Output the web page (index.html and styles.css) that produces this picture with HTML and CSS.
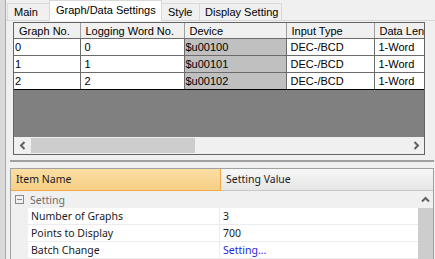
FILE: index.html
```html
<!doctype html>
<html>
<head>
    <meta charset="UTF-8">
    <title>Graph/Data Settings</title>
    <link rel="stylesheet" href="styles.css">
</head>
<body>
    <div class="window">
        <div class="side"></div>
        <div class="main">
            <ul class="tabs">
                <li class="t-main">Main</li>
                <li class="t-graph active">Graph/Data Settings</li>
                <li class="t-style">Style</li>
                <li class="t-disp">Display Setting</li>
            </ul>
            <div class="panel">
                <div class="grid">
                    <table class="data">
                        <colgroup>
                            <col class="c1"><col class="c2"><col class="c3"><col class="c4"><col class="c5">
                        </colgroup>
                        <tr class="head">
                            <th>Graph No.</th><th>Logging Word No.</th><th>Device</th><th>Input Type</th><th>Data Length</th>
                        </tr>
                        <tr>
                            <td>0</td><td>0</td><td class="dev">$u00100</td><td>DEC-/BCD</td><td>1-Word</td>
                        </tr>
                        <tr>
                            <td>1</td><td>1</td><td class="dev">$u00101</td><td>DEC-/BCD</td><td>1-Word</td>
                        </tr>
                        <tr class="last">
                            <td>2</td><td>2</td><td class="dev">$u00102</td><td>DEC-/BCD</td><td>1-Word</td>
                        </tr>
                    </table>
                    <div class="empty"></div>
                    <div class="hscroll">
                        <div class="arrow">
                            <svg width="8" height="9" viewBox="0 0 8 9"><path d="M5.5 1 L2 4.5 L5.5 8" fill="none" stroke="#606060" stroke-width="2"/></svg>
                        </div>
                        <div class="thumb"></div>
                        <div class="track"></div>
                        <div class="arrow">
                            <svg width="8" height="9" viewBox="0 0 8 9"><path d="M2.5 1 L6 4.5 L2.5 8" fill="none" stroke="#606060" stroke-width="2"/></svg>
                        </div>
                    </div>
                </div>
            </div>
            <div class="splitter"></div>
            <div class="props">
                <div class="props-body">
                    <div class="props-head">
                        <div class="ph-name">Item Name</div>
                        <div class="ph-value">Setting Value</div>
                    </div>
                    <div class="cat">
                        <span class="minus"></span>
                        <span>Setting</span>
                    </div>
                    <div class="row">
                        <div class="margin"></div>
                        <div class="name">Number of Graphs</div>
                        <div class="value">3</div>
                    </div>
                    <div class="row">
                        <div class="margin"></div>
                        <div class="name">Points to Display</div>
                        <div class="value">700</div>
                    </div>
                    <div class="row">
                        <div class="margin"></div>
                        <div class="name">Batch Change</div>
                        <div class="value link">Setting...</div>
                    </div>
                </div>
                <div class="vscroll">
                    <div class="varrow">
                        <svg width="9" height="7" viewBox="0 0 9 7"><path d="M1 5.5 L4.5 2 L8 5.5" fill="none" stroke="#606060" stroke-width="2"/></svg>
                    </div>
                    <div class="vthumb"></div>
                </div>
            </div>
        </div>
    </div>
</body>
</html>
```

FILE: styles.css
```css
body {
    margin: 0;
    background-color: #f0f0f0;
    font-family: "Liberation Sans", Arial, sans-serif;
    font-size: 11px;
    color: #000;
}
.window {
    display: flex;
    width: 435px;
    height: 259px;
    overflow: hidden;
}
.side {
    width: 5px;
    flex-shrink: 0;
    background-color: #dadada;
    border-right: 1px solid #a9a9a9;
}
.main {
    flex: 1;
    display: flex;
    flex-direction: column;
    min-width: 0;
}

/* 选项卡 */
.tabs {
    display: flex;
    align-items: flex-end;
    height: 20px;
    margin: 0;
    padding: 0 0 0 2px;
    list-style: none;
}
.tabs li {
    box-sizing: border-box;
    flex-shrink: 0;
    height: 17px;
    line-height: 16px;
    padding-left: 6px;
    border: 1px solid #d9d9d9;
    border-bottom: none;
    margin-left: -1px;
    font-size: 11px;
    white-space: nowrap;
}
.tabs .t-main { width: 43px; }
.tabs .t-graph { width: 113px; }
.tabs .t-style { width: 39px; }
.tabs .t-disp { width: 83px; padding-left: 5px; }
.tabs li.active {
    height: 21px;
    line-height: 19px;
    background-color: #fff;
    position: relative;
    z-index: 1;
    margin-bottom: -1px;
}
.panel {
    border-top: 1px solid #d9d9d9;
    padding: 1px 4px 0 7px;
}

/* 数据表格 */
.grid {
    border: 1px solid #646464;
    width: 410px;
    overflow: hidden;
}
.data {
    border-collapse: collapse;
    table-layout: fixed;
    width: 440px;
}
.c1 { width: 66px; }
.c2 { width: 104px; }
.c3 { width: 102px; }
.c4 { width: 88px; }
.c5 { width: 80px; }
.data th,
.data td {
    height: 16px;
    padding: 0 0 0 4px;
    text-align: left;
    font-weight: normal;
    white-space: nowrap;
    overflow: hidden;
    border: 1px solid #6b6b6b;
    border-top: none;
    font-size: 11px;
}
.data th:first-child,
.data td:first-child {
    border-left: none;
}
.data td:first-child {
    padding-left: 1px;
}
.data .head th {
    height: 15px;
    background-color: #f0f0f0;
    border-color: #a0a0a0;
    border-bottom-color: #6b6b6b;
    padding-left: 5px;
}
.data td {
    background-color: #fff;
}
.data td.dev {
    background-color: #c0c0c0;
    padding-left: 1px;
}
.data .last td {
    border-bottom: 1px solid #000;
}
.empty {
    height: 47px;
    background-color: #808080;
}
.hscroll {
    display: flex;
    height: 17px;
    background-color: #f0f0f0;
}
.hscroll .arrow {
    width: 17px;
    display: flex;
    align-items: center;
    justify-content: center;
}
.hscroll .thumb {
    width: 164px;
    margin: 1px 0;
    background-color: #cdcdcd;
}
.hscroll .track {
    flex: 1;
}

.splitter {
    height: 1px;
    margin: 5px 1px 0 4px;
    border-top: 1px solid #a0a0a0;
    border-bottom: 1px solid #a0a0a0;
    background-color: #fff;
}

/* 属性表格 */
.props {
    display: flex;
    margin: 6px 1px 0 4px;
    border: 1px solid #a0a0a0;
    border-bottom: none;
    background-color: #f0f0f0;
    flex: 1;
    font-family: "Noto Sans", "Open Sans", sans-serif;
    font-size: 10.5px;
    color: #1a1a1a;
    position: relative;
}
.props-body {
    flex: 1;
    min-width: 0;
}
.props-head {
    display: flex;
    height: 22px;
    margin-right: -15px;
    position: relative;
    z-index: 1;
}
.ph-name {
    width: 204px;
    padding-left: 5px;
    line-height: 21px;
    background: linear-gradient(#fbdea4, #f7cf85);
    border-right: 1px solid #f0a84c;
    border-bottom: 1px solid #f0a84c;
}
.ph-value {
    flex: 1;
    padding-left: 5px;
    line-height: 21px;
    background: linear-gradient(#f7f7f7, #e6e6e6);
    border-bottom: 1px solid #c8c8c8;
}
.cat {
    display: flex;
    align-items: center;
    height: 17px;
    color: #6d6d6d;
}
.minus {
    width: 7px;
    height: 7px;
    margin: 0 6px 0 4px;
    border: 1px solid #8a8a8a;
    background: linear-gradient(#8a8a8a, #8a8a8a) center / 5px 1px no-repeat;
}
.row {
    display: flex;
    height: 17px;
}
.row .margin {
    width: 17px;
    flex-shrink: 0;
}
.row .name {
    width: 188px;
    padding-left: 3px;
    background-color: #fff;
    border-bottom: 1px solid #ececec;
    border-right: 1px solid #ececec;
    line-height: 16px;
}
.row .value {
    flex: 1;
    padding-left: 3px;
    background-color: #fff;
    border-bottom: 1px solid #ececec;
    line-height: 16px;
}
.row .value.link {
    color: #2626e6;
}
.vscroll {
    width: 15px;
    display: flex;
    flex-direction: column;
    padding-top: 22px;
    background-color: #f0f0f0;
}
.varrow {
    height: 17px;
    display: flex;
    align-items: center;
    justify-content: center;
}
.vthumb {
    flex: 1;
    background-color: #cdcdcd;
}
```
